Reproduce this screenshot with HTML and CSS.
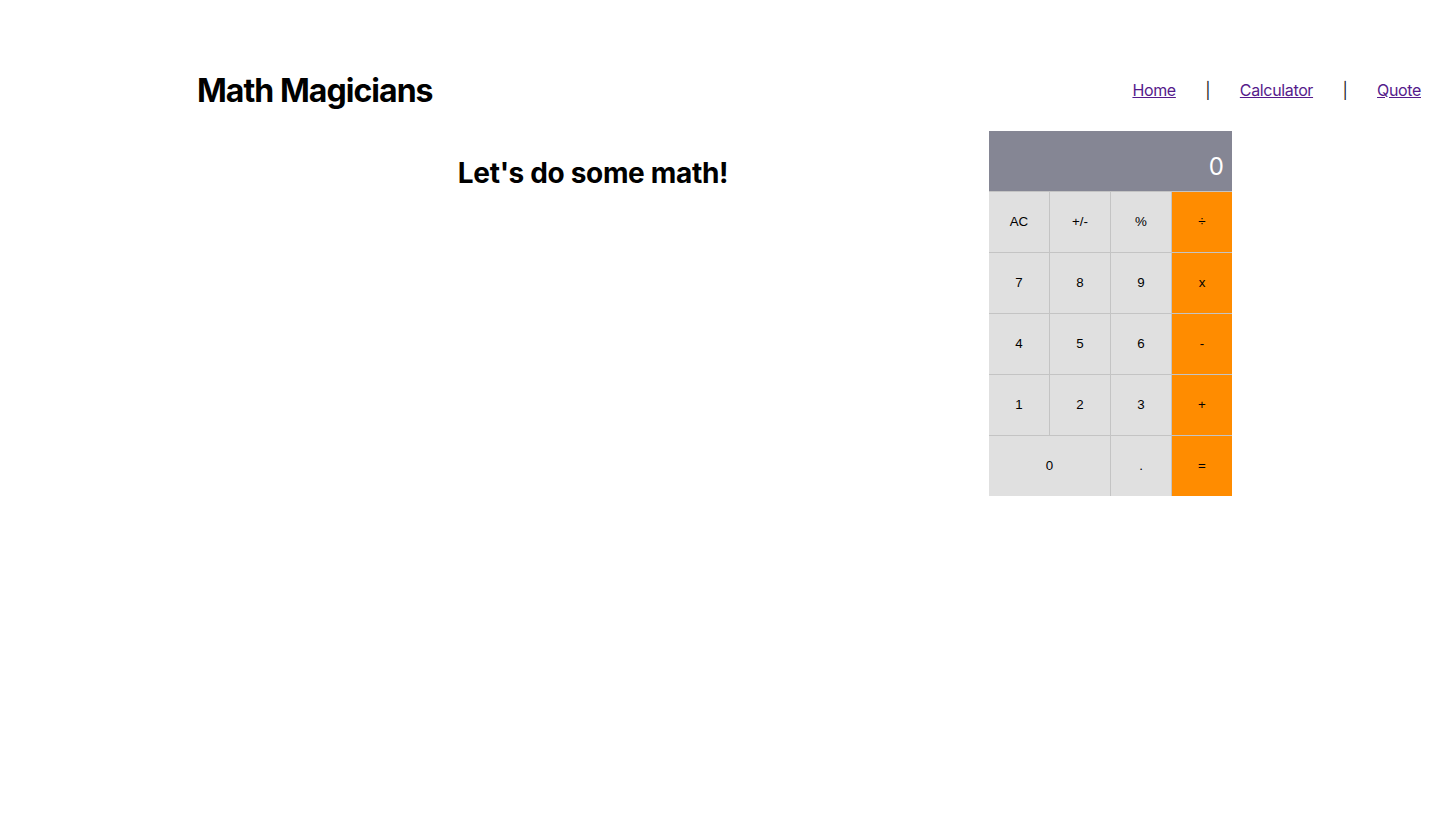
FILE: index.html
```html
<!DOCTYPE html>
<html lang="en">
<head>
<meta charset="utf-8">
<title>Math Magicians</title>
<link rel="stylesheet" href="styles.css">
</head>
<body>
<header class="header">
  <h1 class="brand">Math Magicians</h1>
  <nav class="nav">
    <a href="#" class="nav-link">Home</a>
    <span class="sep">|</span>
    <a href="#" class="nav-link">Calculator</a>
    <span class="sep">|</span>
    <a href="#" class="nav-link">Quote</a>
  </nav>
</header>
<main class="main">
  <section class="intro">
    <h2 class="intro-title">Let's do some math!</h2>
  </section>
  <section class="calc">
    <div class="display">0</div>
    <button class="key">AC</button>
    <button class="key">+/-</button>
    <button class="key">%</button>
    <button class="key op">÷</button>
    <button class="key">7</button>
    <button class="key">8</button>
    <button class="key">9</button>
    <button class="key op">x</button>
    <button class="key">4</button>
    <button class="key">5</button>
    <button class="key">6</button>
    <button class="key op">-</button>
    <button class="key">1</button>
    <button class="key">2</button>
    <button class="key">3</button>
    <button class="key op">+</button>
    <button class="key zero">0</button>
    <button class="key">.</button>
    <button class="key op">=</button>
  </section>
</main>
</body>
</html>
```

FILE: styles.css
```css
* { box-sizing: border-box; }
body {
  margin: 0;
  font-family: Inter, "Noto Sans", sans-serif;
  color: #000;
  background: #fff;
}
.header {
  display: flex;
  justify-content: space-between;
  align-items: center;
  padding: 71px 16px 0 197px;
}
.brand {
  margin: 0;
  font-size: 32px;
  font-weight: 700;
  line-height: 40px;
  letter-spacing: -0.95px;
}
.nav {
  display: flex;
  align-items: center;
  gap: 29.5px;
  font-size: 16px;
  letter-spacing: -0.35px;
  padding-bottom: 3px;
}
.nav-link { color: #551a8b; }
.sep { color: #222; }
.main {
  display: flex;
  padding: 20px 0 0 0;
}
.intro {
  width: 989px;
  padding-left: 197px;
  display: flex;
  justify-content: center;
}
.intro-title {
  margin: 22px 0 0 0;
  font-size: 28px;
  font-weight: 700;
  line-height: 40px;
  letter-spacing: -0.33px;
}
.calc {
  display: grid;
  grid-template-columns: repeat(4, 60px);
  grid-auto-rows: 60px;
  gap: 1px;
  background: #c4c4c4;
  width: 243px;
}
.display {
  grid-column: 1 / 5;
  background: #858694;
  color: #fff;
  font-size: 24px;
  text-align: right;
  padding: 21px 8px 0 0;
  font-family: Inter, "Noto Sans", sans-serif;
}
.key {
  border: 0;
  margin: 0;
  padding: 0 0 2px 0;
  background: #e0e0e0;
  font-family: "Liberation Sans", Arial, sans-serif;
  font-size: 13.33px;
  color: #000;
}
.key.op { background: #ff8c00; }
.key.zero { grid-column: span 2; }
```
